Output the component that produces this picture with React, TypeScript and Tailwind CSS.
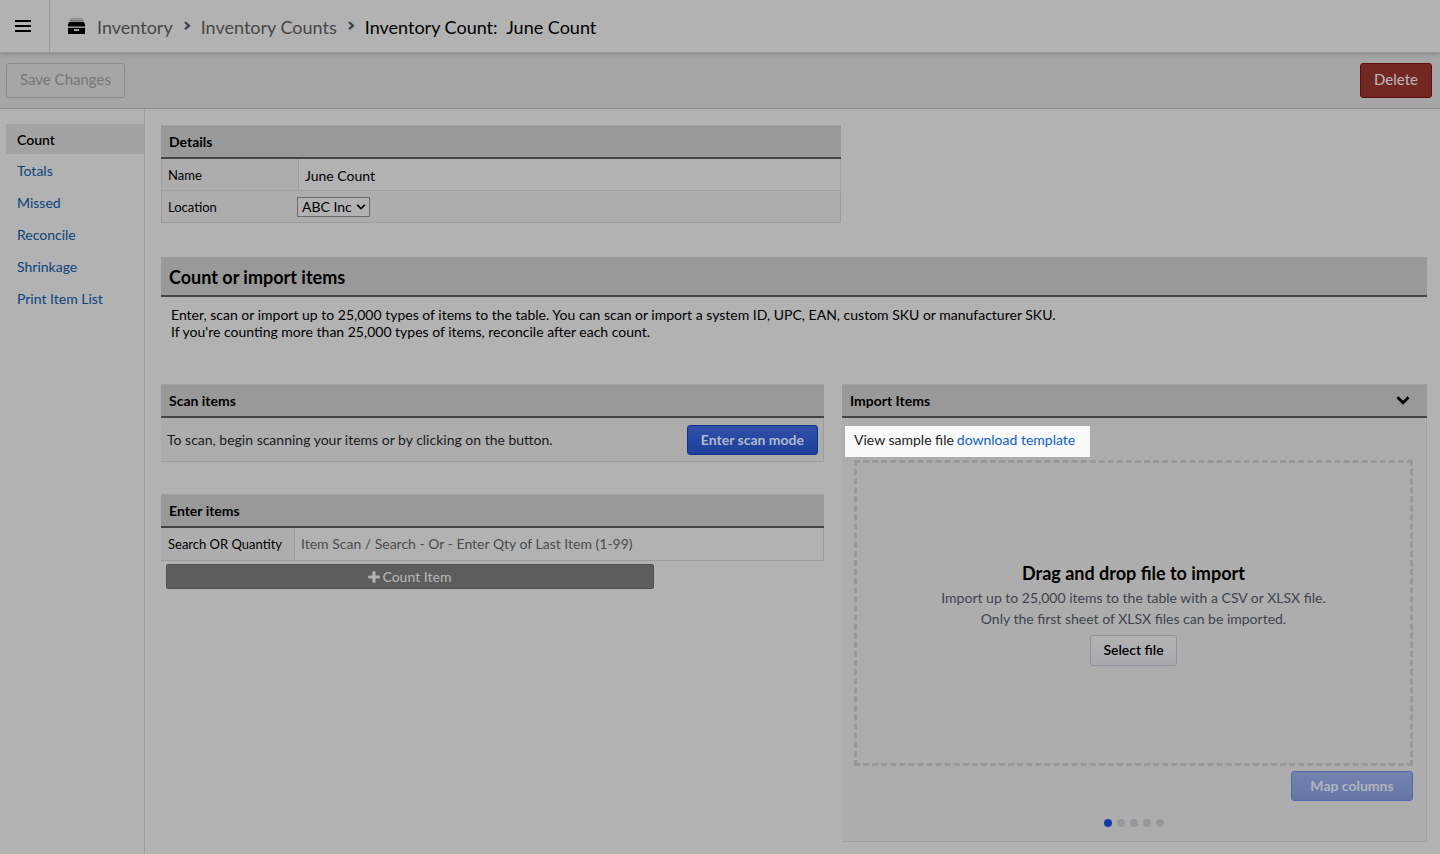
import type { ReactNode } from "react";

const NAV_LINKS = ["Totals", "Missed", "Reconcile", "Shrinkage", "Print Item List"];
const STEPS = [1, 2, 3, 4, 5];

function Chevron() {
    return (
        <svg className="h-[10px] w-[8px] shrink-0" viewBox="0 0 8 10" fill="none" stroke="#3c4350" strokeWidth="2.2">
            <path d="M2 1.2 6 4.700l-4 3.500" />
        </svg>
    );
}

function DrawerIcon() {
    return (
        <svg className="mr-3 h-[17px] w-[17px] shrink-0" viewBox="0 0 17 17">
            <path d="M2.5 0h12l.4 1.4H2.1z" fill="#8a8a8a" />
            <path d="M1.8 2h13.4l.6 1.6H1.2z" fill="#707070" />
            <path d="M1.2 4h14.600l1.200 2.200V8.500H0V6.200z" fill="#000" />
            <path d="M0 9.800h17V16H0z" fill="#000" />
            <path d="M6 11.200h5V13H6z" fill="#b2b2b2" />
        </svg>
    );
}

function PanelHeader({ children }: { children: ReactNode }) {
    return (
        <div className="flex h-[34px] items-center justify-between border-t border-b-2 border-t-[#a0a0a0] border-b-[#444] bg-[#999] px-2">
            {children}
        </div>
    );
}

export default function App() {
    return (
        <div className="flex min-h-screen flex-col bg-[#b2b2b2] font-['Lato',sans-serif] text-sm text-black">

            {/* TOP BAR */}
            <header className="relative flex h-[53px] items-center border-b border-[#989898] shadow-[0_1px_5px_rgba(0,0,0,0.2)]">
                <button aria-label="Menu" className="flex h-full w-[50px] items-center border-r border-[#9a9a9a] pl-[15px]">
                    <svg className="h-[14px] w-[16px]" viewBox="0 0 16 14" stroke="#000" strokeWidth="2">
                        <path d="M0 2h16M0 7h16M0 12h16" />
                    </svg>
                </button>

                <nav aria-label="Breadcrumb" className="flex items-center pl-[18px] text-lg">
                    <DrawerIcon />
                    <a href="#inventory" className="pt-[2px] text-[#464646]">Inventory</a>
                    <span className="px-[10px]"><Chevron /></span>
                    <a href="#counts" className="pt-[2px] text-[#464646]">Inventory Counts</a>
                    <span className="px-[10px]"><Chevron /></span>
                    <h1 className="pt-[2px]">Inventory Count: &nbsp;June Count</h1>
                </nav>
            </header>

            {/* ACTIONS */}
            <div className="flex h-14 items-center justify-between border-b border-[#8f8f8f] bg-[#a6a6a6] pr-2 pl-[6px]">
                <button disabled className="h-[35px] rounded-[3px] border border-[#8a8a8a] px-[13px] pb-[2px] text-[15px] text-[#777]">Save Changes</button>
                <button className="h-[35px] rounded-[3px] border border-[#5f0d0f] bg-[#732824] px-[13px] pb-[2px] text-[15px] font-medium text-[#b8b2b2]">Delete</button>
            </div>

            <div className="flex flex-1">

                {/* SIDEBAR */}
                <aside className="w-[145px] shrink-0 border-r border-[#9f9f9f] pt-[15px] pl-[6px]">
                    <a href="#count" aria-current="page" className="flex h-[30px] items-center bg-[#a3a3a3] px-[11px] pt-[2px] font-semibold">Count</a>
                    {NAV_LINKS.map((link) => (
                        <a key={link} href="#section" className="flex h-8 items-center px-[11px] pt-[2px] text-[#0b437c]">{link}</a>
                    ))}
                </aside>

                <main className="min-w-0 flex-1 pt-4 pr-[13px] pb-3 pl-4">

                    {/* DETAILS */}
                    <section className="max-w-[680px]">
                        <PanelHeader>
                            <h2 className="font-bold">Details</h2>
                        </PanelHeader>
                        <div className="flex h-8 border-x border-b border-[#a2a2a2]">
                            <label htmlFor="name" className="flex w-[137px] items-center border-r border-[#9c9c9c] bg-[#adadad] pt-[2px] pl-[6px] text-[13px]">Name</label>
                            <input id="name" defaultValue="June Count" className="min-w-0 flex-1 px-[6px] pt-[2px] outline-none" />
                        </div>
                        <div className="flex h-8 items-center border-x border-b border-[#9c9c9c] bg-[#adadad]">
                            <label htmlFor="location" className="w-[135px] pt-[2px] pl-[6px] text-[13px]">Location</label>
                            <div className="relative">
                                <select id="location" className="h-5 w-[73px] appearance-none border border-[#6b6b6b] bg-[#b2b2b2] pl-1 leading-none outline-none">
                                    <option>ABC Inc</option>
                                </select>
                                <svg className="pointer-events-none absolute top-[7px] right-1 h-[6px] w-[10px]" viewBox="0 0 10 6" fill="none" stroke="#000" strokeWidth="1.7">
                                    <path d="m1.2.8 3.8 3.8L8.8.8" />
                                </svg>
                            </div>
                        </div>
                    </section>

                    {/* INTRO */}
                    <section className="mt-[34px]">
                        <h2 className="flex h-10 items-center border-b-2 border-[#444] bg-[#999] px-2 pt-[2px] text-lg font-bold">Count or import items</h2>
                        <p className="px-[10px] pt-[9px] leading-[17px]">
                            Enter, scan or import up to 25,000 types of items to the table. You can scan or import a system ID, UPC, EAN, custom SKU or manufacturer SKU.
                            <br />
                            If you're counting more than 25,000 types of items, reconcile after each count.
                        </p>
                    </section>

                    <div className="mt-11 grid grid-cols-[17fr_15fr] gap-[18px]">

                        <div className="min-w-0">
                            {/* SCAN */}
                            <PanelHeader>
                                <h3 className="font-bold">Scan items</h3>
                            </PanelHeader>
                            <div className="flex h-11 items-center justify-between border-r border-b border-[#9c9c9c] bg-[#adadad] pr-[5px] pl-[6px]">
                                <p className="text-[#1a1a1a]">To scan, begin scanning your items or by clicking on the button.</p>
                                <button className="h-[30px] rounded-[3px] border border-[#10308e] bg-linear-to-b from-[#3050a8] to-[#1d409d] px-[13px] font-bold text-[#b2b9c9]">Enter scan mode</button>
                            </div>

                            {/* ENTER */}
                            <div className="mt-8">
                                <PanelHeader>
                                    <h3 className="font-bold">Enter items</h3>
                                </PanelHeader>
                                <div className="flex h-[33px] border-r border-b border-[#9c9c9c]">
                                    <label htmlFor="search" className="flex w-[134px] items-center border-r border-[#9c9c9c] bg-[#adadad] pl-[7px] text-[13px]">Search OR Quantity</label>
                                    <input id="search" placeholder="Item Scan / Search - Or - Enter Qty of Last Item (1-99)" className="min-w-0 flex-1 px-[6px] outline-none placeholder:text-[#4c4c4c]" />
                                </div>
                                <button className="mt-[3px] ml-[5px] flex h-[25px] w-[488px] items-center justify-center gap-[2px] rounded-[2px] border border-[#515151] bg-[#5d5d5d] font-medium text-[#b2b2b2]">
                                    <svg className="h-[12px] w-[12px]" viewBox="0 0 12 12" fill="currentColor">
                                        <path d="M4.4 1c0-.5.3-.8.8-.8h1.6c.5 0 .8.3.8.8v3.400H11c.5 0 .8.3.8.8v1.600c0 .5-.3.8-.8.8H7.600V11c0 .5-.3.8-.8.8H5.200c-.5 0-.8-.3-.8-.8V7.600H1c-.5 0-.8-.3-.8-.8V5.200c0-.5.3-.8.8-.8h3.400z" />
                                    </svg>
                                    Count Item
                                </button>
                            </div>
                        </div>

                        {/* IMPORT */}
                        <section className="min-w-0">
                            <PanelHeader>
                                <h3 className="font-bold">Import Items</h3>
                                <button aria-label="Collapse import items" className="mr-[9px]">
                                    <svg className="h-[9px] w-[14px]" viewBox="0 0 14 9" fill="none" stroke="#000" strokeWidth="2.8">
                                        <path d="m1.5 1.3 5.5 5.4 5.5-5.400" />
                                    </svg>
                                </button>
                            </PanelHeader>
                            <div className="border-r border-b border-[#9f9f9f] bg-[#adadad] pt-2 pr-[13px] pb-[14px] pl-3">
                                <p className="-ml-[9px] flex h-[31px] w-fit items-center gap-[3px] bg-[#f9f9f9] pr-[15px] pb-[3px] pl-[9px] text-[#222]">
                                    View sample file
                                    <a href="#template" className="text-[#0b62c8]">download template</a>
                                </p>

                                <div className="mt-[3px] flex h-[306px] flex-col items-center justify-center border-3 border-dashed border-[#96999c] text-center">
                                    <h4 className="text-lg leading-6 font-bold">Drag and drop file to import</h4>
                                    <p className="mt-[2px] leading-[21px] text-[#3d444c]">
                                        Import up to 25,000 items to the table with a CSV or XLSX file.
                                        <br />
                                        Only the first sheet of XLSX files can be imported.
                                    </p>
                                    <button className="mt-[6px] h-[31px] rounded-[3px] border border-[#8b9199] bg-linear-to-b from-[#b2b2b2] to-[#a9abae] px-3 font-semibold">Select file</button>
                                </div>

                                <div className="mt-[5px] flex justify-end">
                                    <button disabled className="h-[30px] w-[122px] rounded-[3px] border border-[#5569aa] bg-linear-to-b from-[#7382ad] to-[#6677a8] font-bold text-[#b0b4be]">Map columns</button>
                                </div>

                                <div className="mt-[18px] flex justify-center gap-[5px]">
                                    {STEPS.map((step) => (
                                        <span key={step} className={`h-2 w-2 rounded-full ${step === 1 ? "bg-[#143ba2]" : "bg-[#96999c]"}`} />
                                    ))}
                                </div>
                            </div>
                        </section>

                    </div>
                </main>
            </div>
        </div>
    );
}
